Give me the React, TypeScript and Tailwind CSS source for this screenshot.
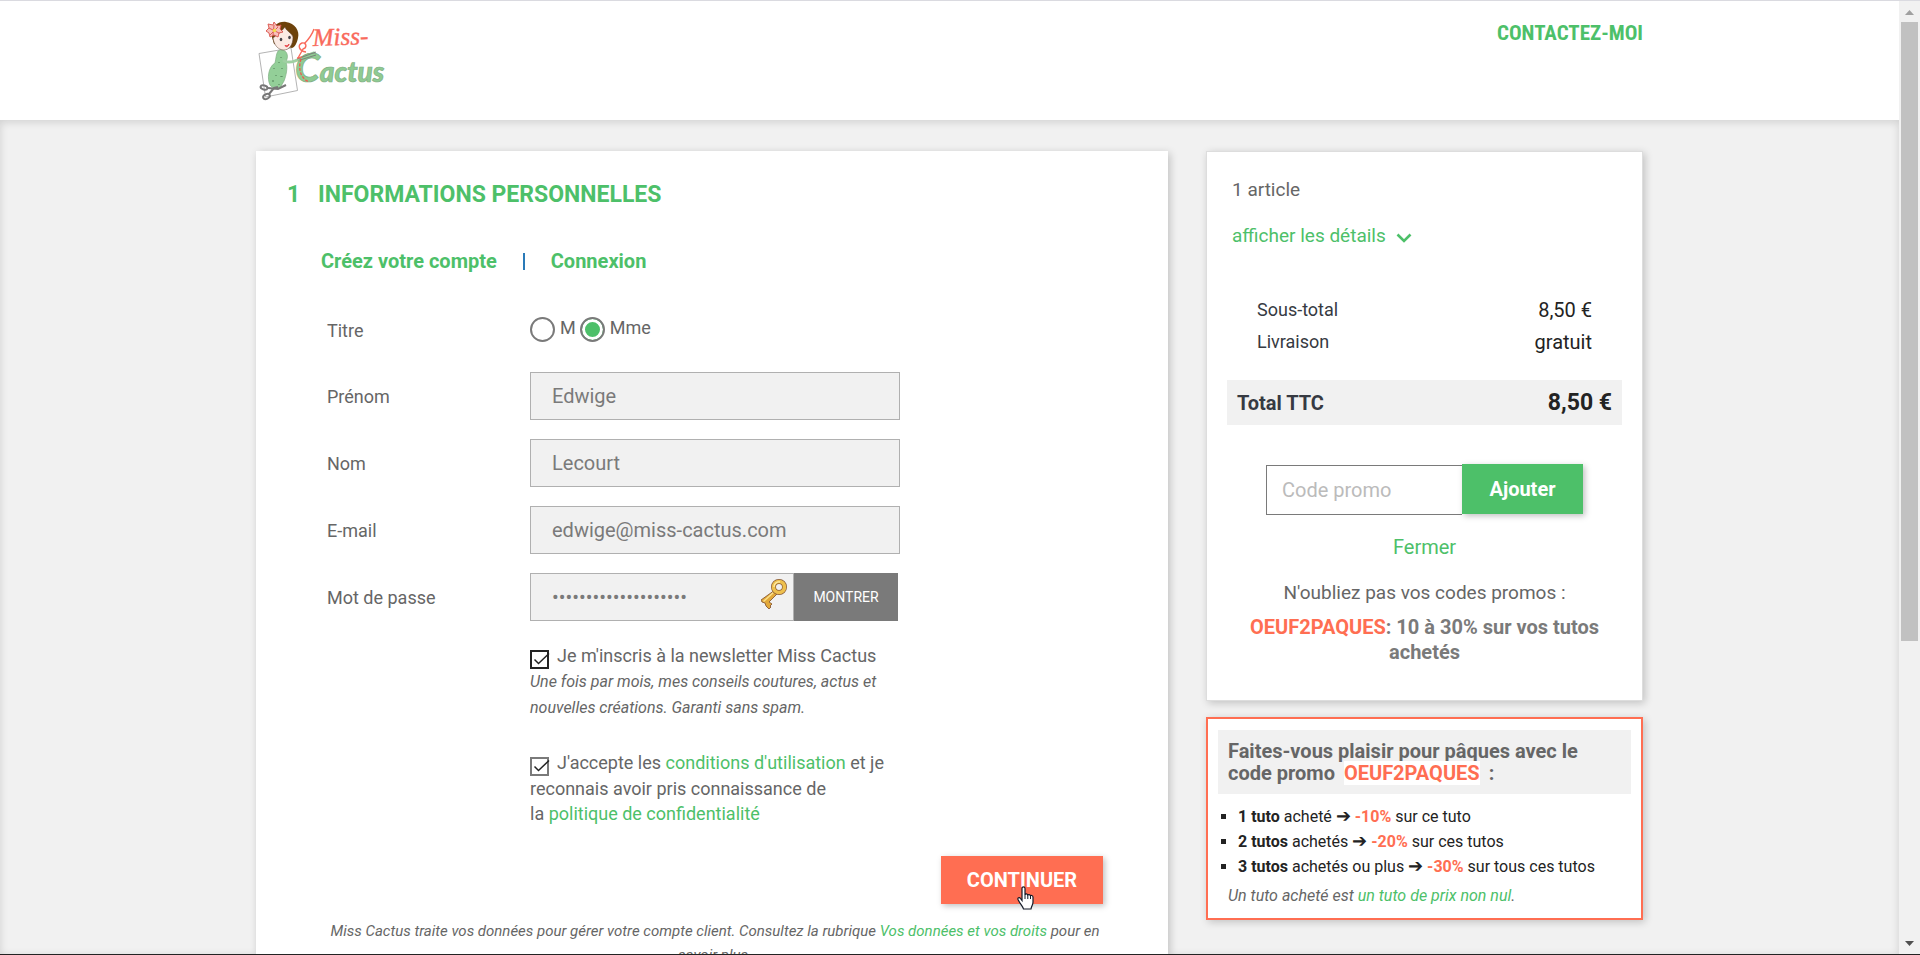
import { useState } from "react";
import type { ReactNode } from "react";

type FieldProps = {
  id: string;
  label: string;
  children: ReactNode;
};

type CheckProps = {
  id: string;
  className: string;
};

type OfferType = {
  count: string;
  text: string;
  discount: string;
  target: string;
};

const offers: OfferType[] = [
  { count: "1 tuto", text: "acheté", discount: "-10%", target: "sur ce tuto" },
  { count: "2 tutos", text: "achetés", discount: "-20%", target: "sur ces tutos" },
  {
    count: "3 tutos",
    text: "achetés ou plus",
    discount: "-30%",
    target: "sur tous ces tutos",
  },
];

function Logo() {
  return (
    <svg
      className="w-[140px] h-[82px]"
      viewBox="16 20 140 82"
      role="img"
      aria-label="Miss Cactus"
    >
      {/* pattern sheet */}
      <path
        d="M19 53.500 51 48 57.500 90.500 25.500 97Z"
        fill="#fff"
        stroke="#aaa"
        strokeWidth="0.900"
      />
      {/* cactus body */}
      <path
        d="M38 51c3-2 8-1 9 3 1 3 0 5-1 8 2 6 0 14-2 19l-4 7c-4 1-8 0-10-3-3-6-2-18 5-22 1-4 1-9 3-12Z"
        fill="#93cf98"
        stroke="#7fae83"
        strokeWidth="0.700"
      />
      <path
        d="M44 61c6 3 12 0 17-3l13-5"
        fill="none"
        stroke="#9fd0a2"
        strokeWidth="3"
        strokeLinecap="round"
      />
      <path
        d="M34 68v1m5-7v1m3 5v1m-6 6v1m5 0v1m-8 4v1m6 2v1m2-28v1m-8 22v1m9-5v1"
        stroke="#4e7d55"
        strokeWidth="1"
      />
      {/* head */}
      <path
        d="M31 34c0-8 8-13 15-12 9 1 14 9 12 16-1 5-3 9-6 10l-18-4Z"
        fill="#6d420b"
      />
      <path
        d="M33 38c4-3 9-7 12-11 1 4 7 6 8 10 0 8-4 13-9 13-6 0-10-5-11-12Z"
        fill="#fbeae3"
        stroke="#5a4030"
        strokeWidth="0.500"
      />
      <ellipse cx="41" cy="39.500" rx="1.300" ry="1.700" fill="#47444a" />
      <ellipse cx="49.500" cy="37.500" rx="1.300" ry="1.700" fill="#47444a" />
      <path d="M45 45.500c2 .5 3 0 4-1.500-.5 3-3 3.500-4 1.500Z" fill="#e8474c" stroke="#e8474c" />
      <g fill="#f8c0bb" stroke="#d9534c" strokeWidth="0.900">
        <path d="m34 22 3 4 4-1-1 4 3 3-4 1-1 4-4-2-4 2-1-4-3-2 3-3-1-4 5 1Z" />
        <path d="m34 25-1 10m-4-7 10 5m-9 2 8-8" fill="none" />
      </g>
      <circle cx="34.500" cy="30.500" r="1.800" fill="#f3dc4b" />
      {/* scissors */}
      <g fill="none" stroke="#777" strokeWidth="2">
        <ellipse cx="24" cy="87.500" rx="3.500" ry="2" transform="rotate(15 24 87.500)" />
        <ellipse cx="26.500" cy="96.500" rx="3.500" ry="2.300" transform="rotate(-25 26.500 96.500)" />
        <path d="m28 88 10 1 8-4M29 94l5-6 4-1" />
      </g>
      <text
        x="73"
        y="46"
        className="font-['Liberation_Serif',serif] italic text-[25px]"
        fill="#f96a5c"
        stroke="#f96a5c"
        strokeWidth="0.400"
        transform="rotate(-2 73 46)"
      >
        Miss-
      </text>
      <text
        x="55"
        y="82"
        className="font-[Lato,sans-serif] font-black italic text-[28px]"
        fill="#8fcb92"
        stroke="#7fae83"
        strokeWidth="0.700"
      >
        <tspan className="text-[40px]">C</tspan>actus
      </text>
      <path
        d="m57 59 19-7M60 60l16-5"
        stroke="#777"
        strokeWidth="0.900"
        fill="none"
      />
      {/* thread */}
      <path
        d="M62 57c-1 0-3 1-5 1m9-6c-7-1-9-7-4-9 5-1 5 5 1 6l-5 9m6-14c4-4 8-9 10-15"
        fill="none"
        stroke="#f96a5c"
        strokeWidth="1.400"
      />
      <path
        d="M61 59c-3 9-1 19 8 23"
        fill="none"
        stroke="#ee5c50"
        strokeWidth="1.400"
        strokeDasharray="3 1.500"
      />
    </svg>
  );
}

function KeyIcon() {
  return (
    <svg
      className="absolute right-[7px] top-1.5 w-[26px] h-[30px]"
      viewBox="0 0 26 30"
      aria-hidden="true"
    >
      <g strokeLinejoin="round">
        <path
          d="m14 11 3 3L8 23l3 2-2 2 1 1-2 2-3-3-1-3-3-1-1-2Z"
          fill="#e2a93a"
          stroke="#8a5a34"
          strokeWidth="0.900"
        />
        <path d="m13.500 12.500-11 10" stroke="#fbe08a" strokeWidth="1.500" />
        <circle cx="18" cy="8" r="5.500" fill="none" stroke="#8a5a34" strokeWidth="5" />
        <circle cx="18" cy="8" r="5.500" fill="none" stroke="#eec04e" strokeWidth="3.600" />
        <path
          d="M13 8a5 5 0 0 1 6-5"
          fill="none"
          stroke="#fdeaa5"
          strokeWidth="1.300"
        />
      </g>
    </svg>
  );
}

function HandCursor() {
  return (
    <svg
      className="absolute left-[76px] top-[30px] w-[17px] h-6 pointer-events-none"
      viewBox="0 0 17 24"
      aria-hidden="true"
    >
      <path
        d="M5 2.500C5 .3 8 .3 8 2.500V9c0-1.500 2.800-1.500 2.800.5 0-1.500 2.700-1.300 2.700.7 0-1.200 2.500-1 2.500 1V16c0 3-1.500 4-2 7H6.500C6 20 3 18 1 13.500c-.7-1.800 1.500-2.500 2.500-1L5 14.500Z"
        fill="#fff"
        stroke="#111827"
        strokeWidth="1.200"
      />
      <path d="M8 9v4m2.800-4v4m2.700-3v3" stroke="#111827" strokeWidth="1" />
    </svg>
  );
}

function Field({ id, label, children }: FieldProps) {
  return (
    <div className="flex items-center">
      <label htmlFor={id} className="w-[203px] shrink-0 pt-0.5 text-lg">
        {label}
      </label>
      {children}
    </div>
  );
}

function Check({ id, className }: CheckProps) {
  return (
    <span className="relative inline-block size-[19px] mr-2 align-[-7px]">
      <input
        type="checkbox"
        id={id}
        defaultChecked
        className={`block size-[19px] appearance-none border-2 bg-white ${className}`}
      />
      <svg
        className="absolute inset-0 size-[19px] pointer-events-none overflow-visible"
        viewBox="0 0 19 19"
        aria-hidden="true"
      >
        <path
          d="m4.500 9.500 4 4L19 3.500"
          fill="none"
          stroke="#232323"
          strokeWidth="1.500"
        />
      </svg>
    </span>
  );
}

function Radio({ id, label, checked }: { id: string; label: string; checked: boolean }) {
  return (
    <>
      <input
        type="radio"
        name="title"
        id={id}
        defaultChecked={checked}
        className="size-[25px] appearance-none rounded-full border-2 border-[#7a7a7a] bg-white checked:bg-[#4dc069] checked:shadow-[inset_0_0_0_3px_#fff]"
      />
      <label htmlFor={id} className="ml-[5px] mr-1 pb-0.5 text-lg">
        {label}
      </label>
    </>
  );
}

const inputClass =
  "h-12 border border-[#b0b0b0] bg-[#f1f1f1] px-[21px] text-xl text-[#7a7a7a] outline-none";

function PersonalInformation() {
  const [visible, setVisible] = useState(false);

  return (
    <section className="flex-1 bg-white shadow-[2px_2px_8px_0_rgba(0,0,0,0.2)] pt-[30px] pl-[31px] pr-[65px] text-[#666]">
      <h1 className="flex text-[23px] leading-7 font-bold text-[#4dc069]">
        <span className="w-[31px]">1</span>
        INFORMATIONS PERSONNELLES
      </h1>
      <nav className="mt-10 ml-[34px] flex items-center text-xl leading-6 font-bold text-[#4dc069]">
        <a href="#">Créez votre compte</a>
        <span className="mx-[26px] h-[17px] w-0.5 bg-[#2a7ab8]"></span>
        <a href="#">Connexion</a>
      </nav>

      <form className="mt-8 ml-10" onSubmit={(e) => e.preventDefault()}>
        <div className="flex flex-col gap-[19px]">
          <div className="flex h-12 items-center">
            <div className="w-[203px] pt-1 text-lg">Titre</div>
            <Radio id="title-m" label="M" checked={false} />
            <Radio id="title-mme" label="Mme" checked />
          </div>
          <Field id="firstname" label="Prénom">
            <input id="firstname" className={`${inputClass} w-[370px]`} defaultValue="Edwige" />
          </Field>
          <Field id="lastname" label="Nom">
            <input id="lastname" className={`${inputClass} w-[370px]`} defaultValue="Lecourt" />
          </Field>
          <Field id="email" label="E-mail">
            <input
              id="email"
              className={`${inputClass} w-[370px]`}
              defaultValue="edwige@miss-cactus.com"
            />
          </Field>
          <Field id="password" label="Mot de passe">
            <div className="relative">
              <input
                id="password"
                type={visible ? "text" : "password"}
                className={`${inputClass} block w-[264px]`}
                defaultValue="motdepassecactus2021"
              />
              <KeyIcon />
            </div>
            <button
              type="button"
              onClick={() => setVisible(!visible)}
              className="h-12 w-[104px] bg-[#7a7a7a] text-sm text-white"
            >
              MONTRER
            </button>
          </Field>
        </div>

        <div className="ml-[203px] w-[370px]">
          <div className="mt-[22px] text-lg leading-[26px]">
            <Check id="newsletter" className="border-[#232323]" />
            <label htmlFor="newsletter">
              Je m'inscris à la newsletter Miss Cactus
              <em className="block text-base leading-[26px]">
                Une fois par mois, mes conseils coutures, actus et nouvelles
                créations. Garanti sans spam.
              </em>
            </label>
          </div>
          <div className="mt-[29px] text-lg leading-[25px]">
            <Check id="terms" className="border-[#7a7a7a]" />
            <label htmlFor="terms">
              J'accepte les{" "}
              <a href="#" className="text-[#4dc069]">
                conditions d'utilisation
              </a>{" "}
              et je reconnais avoir pris connaissance de la&nbsp;
              <a href="#" className="text-[#4dc069]">
                politique de confidentialité
              </a>
            </label>
          </div>
        </div>

        <div className="mt-[30px] flex justify-end">
          <button className="relative h-12 w-[162px] bg-[#ff6e52] text-xl font-bold text-white shadow-[2px_2px_6px_0_rgba(0,0,0,0.25)]">
            CONTINUER
            <HandCursor />
          </button>
        </div>
        <p className="mt-[15px] text-center text-[15px] leading-6 italic">
          Miss Cactus traite vos données pour gérer votre compte client.
          Consultez la rubrique{" "}
          <a href="#" className="text-[#4dc069]">
            Vos données et vos droits
          </a>{" "}
          pour en savoir plus.
        </p>
      </form>
    </section>
  );
}

function CartSummary() {
  return (
    <section className="border border-[#ddd] bg-white shadow-[2px_2px_8px_0_rgba(0,0,0,0.2)] px-5 pt-6 pb-[35px]">
      <div className="px-[5px] text-[19px] leading-7 text-[#666]">
        <p>1 article</p>
        <a href="#" className="mt-[18px] flex items-center text-[#4dc069]">
          afficher les détails
          <svg className="ml-2.5 mt-1 w-4 h-2.5" viewBox="0 0 16 10" aria-hidden="true">
            <path d="m1.500 1.500 6.500 6.500 6.500-6.500" fill="none" stroke="#4dc069" strokeWidth="2.600" />
          </svg>
        </a>
      </div>
      <dl className="mt-11 px-[30px] text-[#232323]">
        <div className="flex items-center justify-between">
          <dt className="text-lg leading-8 text-[#363a42]">Sous-total</dt>
          <dd className="text-xl leading-8">8,50 €</dd>
        </div>
        <div className="flex items-center justify-between">
          <dt className="text-lg leading-8 text-[#363a42]">Livraison</dt>
          <dd className="text-xl leading-8">gratuit</dd>
        </div>
      </dl>
      <div className="mt-[22px] flex h-[45px] items-center justify-between bg-[#f1f1f1] px-2.5 font-bold">
        <span className="text-xl text-[#363a42]">Total TTC</span>
        <span className="text-[23px] leading-7 text-[#232323]">8,50 €</span>
      </div>

      <form
        className="mt-[39px] flex justify-center"
        onSubmit={(e) => e.preventDefault()}
      >
        <input
          aria-label="Code promo"
          placeholder="Code promo"
          className="mt-px h-[50px] w-[196px] border border-r-0 border-[#7a7a7a] bg-white px-[15px] text-xl outline-none placeholder:text-[#bbb]"
        />
        <button className="h-[50px] w-[121px] bg-[#4dc069] text-xl font-bold text-white shadow-[2px_2px_6px_0_rgba(0,0,0,0.25)]">
          Ajouter
        </button>
      </form>
      <div className="mt-5 text-center text-xl leading-6 text-[#7a7a7a]">
        <a href="#" className="text-[#4dc069]">
          Fermer
        </a>
        <p className="mt-[22px] text-[19px] leading-6 text-[#666]">
          N'oubliez pas vos codes promos :
        </p>
        <p className="mt-2.5 leading-[25px] font-bold">
          <span className="text-[#ff6e52]">OEUF2PAQUES</span>: 10 à 30% sur vos
          tutos achetés
        </p>
      </div>
    </section>
  );
}

function EasterOffer() {
  return (
    <section className="mt-4 border-2 border-[#ff6e52] bg-white shadow-[2px_2px_8px_0_rgba(0,0,0,0.2)] px-2.5 pt-[11px] pb-2.5 text-[#232323]">
      <h2 className="bg-[#f1f1f1] px-2.5 py-2.5 text-xl leading-[22px] font-bold text-[#666]">
        Faites-vous plaisir pour pâques avec le code promo{" "}
        <span className="mx-1 bg-white text-[#ff6e52]">OEUF2PAQUES</span>{" "}
        <span>:</span>
      </h2>
      <ul className="mt-2.5 ml-5 list-[square] text-base leading-[25px]">
        {offers.map((offer) => (
          <li key={offer.count}>
            <strong className="font-bold">{offer.count}</strong> {offer.text}{" "}
            <span className="text-lg leading-6">➔</span>{" "}
            <span className="font-bold text-[#ff6e52]">{offer.discount}</span>{" "}
            {offer.target}
          </li>
        ))}
      </ul>
      <p className="mt-1 px-2.5 text-base leading-[25px] italic text-[#666]">
        Un tuto acheté est{" "}
        <a href="#" className="text-[#4dc069]">
          un tuto de prix non nul
        </a>
        .
      </p>
    </section>
  );
}

function ScrollTrack() {
  return (
    <div className="flex w-[21px] flex-col items-center bg-[#f1f1f1]">
      <svg className="h-[21px] w-[9px]" viewBox="0 0 9 21" aria-hidden="true">
        <path d="M0 14h9L4.500 9Z" fill="#a0a0a0" />
      </svg>
      <div className="flex w-[17px] flex-1 flex-col">
        <div className="h-[68%] bg-[#c1c1c1]"></div>
      </div>
      <svg className="h-[21px] w-[9px]" viewBox="0 0 9 21" aria-hidden="true">
        <path d="M0 8h9l-4.500 5Z" fill="#505050" />
      </svg>
    </div>
  );
}

export default function App() {
  return (
    <div className="flex h-screen overflow-hidden border-t border-t-[#dadae0] border-b border-b-[#232323] bg-[#f1f1f1] font-[Roboto,sans-serif]">
      <div className="flex min-w-0 flex-1 flex-col">
        <header className="h-[119px] shrink-0 bg-white">
          <div className="mx-auto flex max-w-[1387px] items-start justify-between pt-[19px]">
            <a href="#">
              <Logo />
            </a>
            <a
              href="#"
              className="pt-px font-['Roboto_Condensed',Roboto,sans-serif] text-[21px] leading-6 font-bold text-[#4dc069]"
            >
              CONTACTEZ-MOI
            </a>
          </div>
        </header>
        <main className="min-h-0 flex-1 overflow-hidden pt-[31px] shadow-[inset_0_2px_8px_0_rgba(0,0,0,0.14)]">
          <div className="mx-auto flex h-full max-w-[1387px] gap-[38px]">
            <PersonalInformation />
            <aside className="w-[437px] shrink-0">
              <CartSummary />
              <EasterOffer />
            </aside>
          </div>
        </main>
      </div>
      <ScrollTrack />
    </div>
  );
}
